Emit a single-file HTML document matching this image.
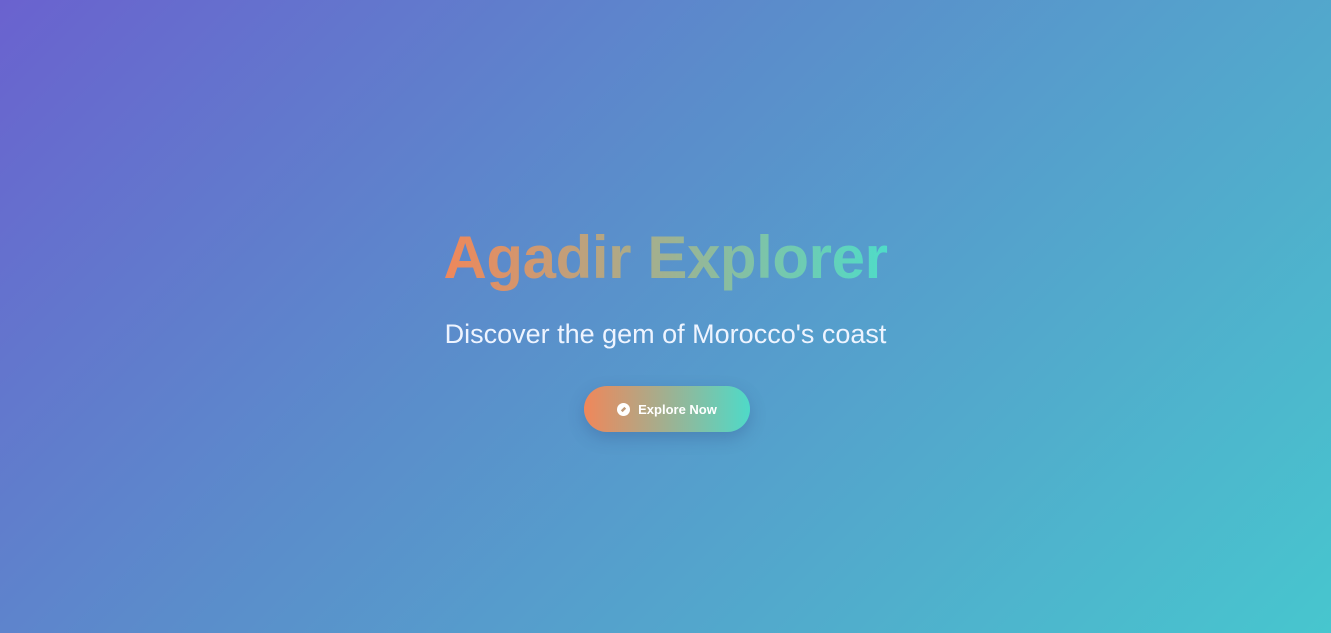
<!DOCTYPE html>
<html><head><meta charset="utf-8"><style>
html,body{margin:0;width:1331px;height:633px;overflow:hidden}
body{background:linear-gradient(135deg,#6a62cf 0%,#5b8ccb 40%,#52a9cc 70%,#47c6ce 100%);font-family:"Liberation Sans",sans-serif;position:relative}
h1{position:absolute;left:0;width:1331px;top:218px;margin:0;text-align:center;font-size:60px;font-weight:bold;line-height:80px;letter-spacing:-0.4px}
h1 span{background:linear-gradient(90deg,#f0875a,#4fdcc8);-webkit-background-clip:text;background-clip:text;color:transparent}
p{position:absolute;left:0;width:1331px;top:317px;margin:0;text-align:center;color:#eef4ff;font-size:27px;line-height:34px}
.btn{position:absolute;left:584px;top:386px;width:166px;height:46px;border-radius:23px;background:linear-gradient(90deg,#f0875a,#4fdac8);box-shadow:0 6px 16px rgba(40,60,120,.25);color:#fff;font-weight:bold;font-size:13px;display:flex;align-items:center;justify-content:center;gap:8px}
.ic{width:13px;height:13px;border-radius:50%;background:#fff;position:relative}
.ic:after{content:"";position:absolute;left:4px;top:4px;width:5px;height:5px;background:#c09a78;transform:rotate(45deg) scaleX(.5)}
</style></head><body>
<h1><span>Agadir Explorer</span></h1>
<p>Discover the gem of Morocco's coast</p>
<div class="btn"><span class="ic"></span>Explore Now</div>
</body></html>
